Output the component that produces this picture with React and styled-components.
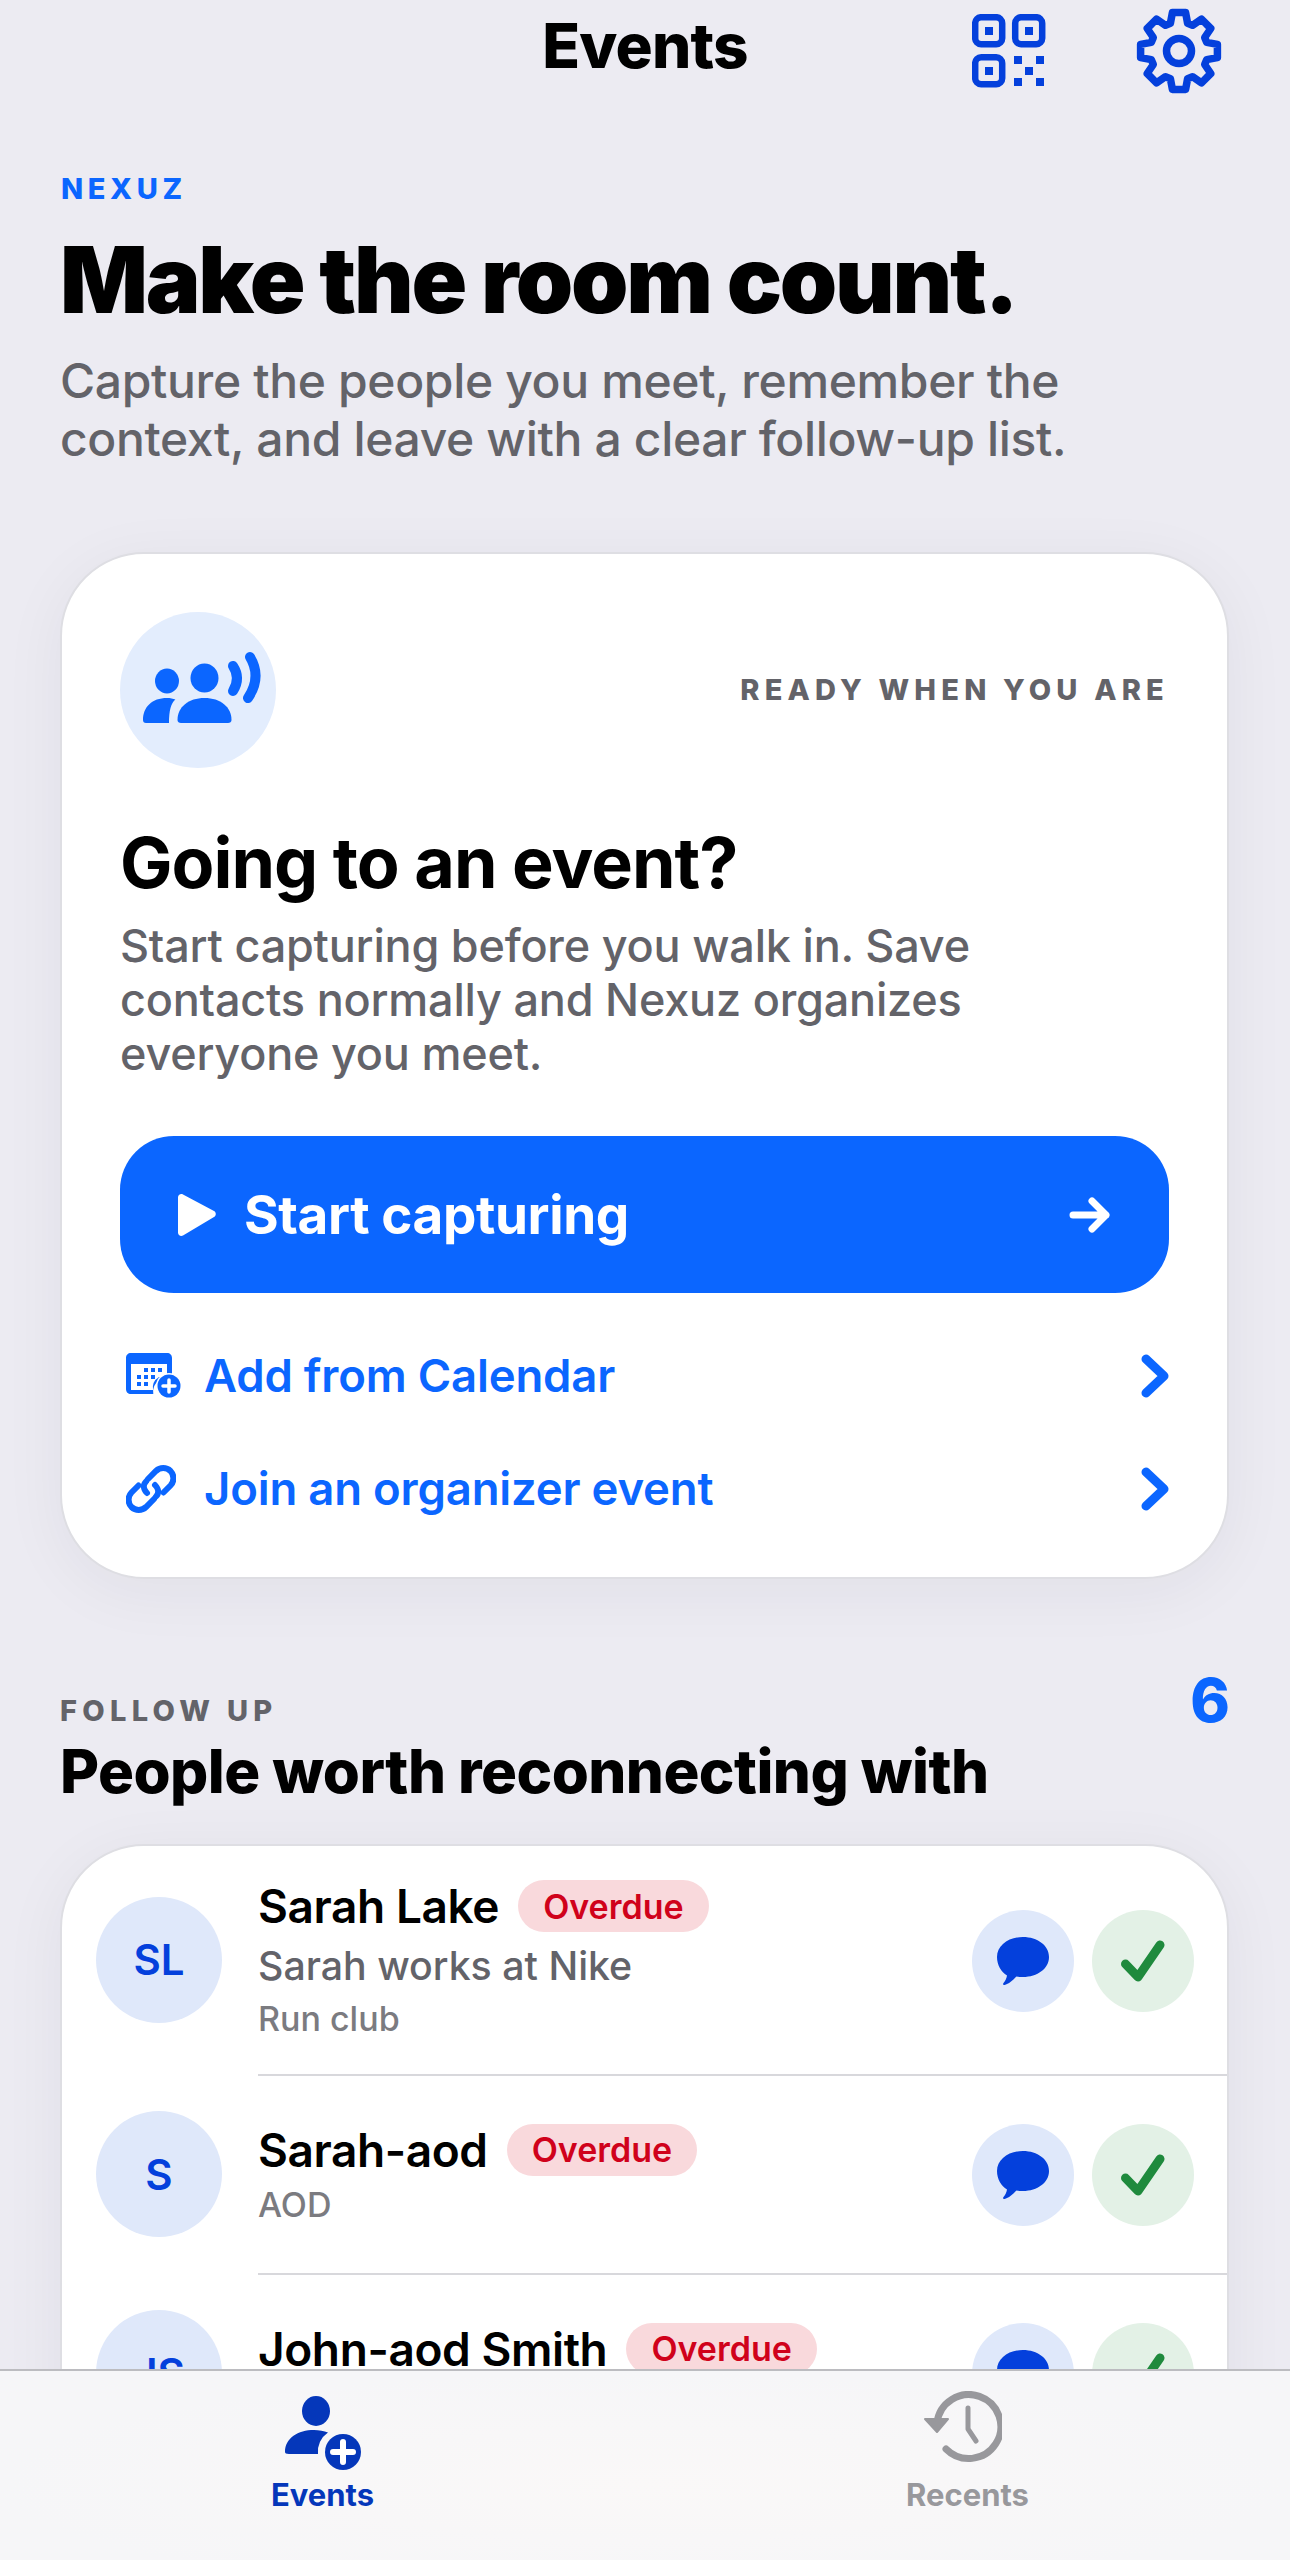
import styled, { createGlobalStyle } from "styled-components";

const blue = "#0b66ff";
const navy = "#0440dc";

const GlobalStyle = createGlobalStyle`
  html, body { margin: 0; padding: 0; background: #ecebf2; }
  * { box-sizing: border-box; }
  body { font-family: Inter, "Noto Sans", sans-serif; -webkit-font-smoothing: antialiased; }
`;

const Screen = styled.div`
  position: relative;
  width: 1290px;
  height: 2560px;
  overflow: hidden;
  background: #ecebf2;
`;

const Nav = styled.header`
  display: grid;
  grid-template-columns: 1fr auto 1fr;
  align-items: center;
  height: 102px;
  padding: 0 68px 6px 68px;
`;

const NavTitle = styled.h1`
  grid-column: 2;
  margin: 0 0 6px;
  font-size: 62px;
  font-weight: 800;
  letter-spacing: -0.8px;
  color: #000;
`;

const NavActions = styled.div`
  grid-column: 3;
  display: flex;
  justify-content: flex-end;
  align-items: center;
  gap: 90px;
  margin-top: 6px;
`;

const Content = styled.main`
  padding: 0 61px 0 60px;
`;

const Hero = styled.section`
  padding-top: 70px;
`;

const Eyebrow = styled.div`
  font-size: 29px;
  line-height: 34px;
  font-weight: 800;
  letter-spacing: 5.3px;
  color: ${(p) => p.$color || "#636369"};
`;

const Brand = styled(Eyebrow)`
  margin-left: 1px;
  letter-spacing: 4.6px;
`;

const Headline = styled.h2`
  margin: 24px 0 0;
  font-size: 92px;
  line-height: 100px;
  font-weight: 900;
  letter-spacing: -2.3px;
  color: #000;
`;

const Lead = styled.p`
  margin: 22px 0 0;
  font-size: 48px;
  line-height: 58px;
  font-weight: 500;
  letter-spacing: -0.35px;
  color: #636369;
`;

const Card = styled.section`
  background: #fff;
  border: 2px solid #dedee3;
  border-radius: 84px;
  box-shadow: 0 12px 64px rgba(30, 30, 60, 0.055);
`;

const CaptureCard = styled(Card)`
  margin-top: 84px;
  height: 1027px;
  padding: 58px;
`;

const CardTop = styled.div`
  display: flex;
  align-items: center;
  justify-content: space-between;
`;

const IconDisc = styled.div`
  display: flex;
  align-items: center;
  justify-content: center;
  width: 156px;
  height: 156px;
  border-radius: 50%;
  background: #e3edfd;
`;

const Ready = styled(Eyebrow)`
  letter-spacing: 5.2px;
`;

const CardTitle = styled.h3`
  margin: 55px 0 0;
  font-size: 70px;
  line-height: 80px;
  font-weight: 700;
  letter-spacing: -1px;
  color: #000;
`;

const CardText = styled.p`
  margin: 16px 0 0;
  font-size: 45px;
  line-height: 54px;
  font-weight: 500;
  letter-spacing: -0.2px;
  color: #636369;
`;

const PrimaryButton = styled.button`
  display: flex;
  align-items: center;
  width: 100%;
  height: 157px;
  margin-top: 55px;
  padding: 0 58px;
  border: 0;
  border-radius: 54px;
  background: ${blue};
  color: #fff;
  font: 700 53px Inter, sans-serif;
  letter-spacing: -0.4px;
`;

const ButtonLabel = styled.span`
  flex: 1;
  margin-left: 28px;
  text-align: left;
`;

const LinkRow = styled.a`
  display: flex;
  align-items: center;
  height: 113px;
  padding-left: 6px;
  color: ${blue};
  font-size: 45.500px;
  font-weight: 600;
  letter-spacing: -0.2px;
`;

const LinkIcon = styled.span`
  display: flex;
  justify-content: flex-start;
  width: 78px;
`;

const LinkLabel = styled.span`
  flex: 1;
`;

const LinkList = styled.div`
  margin-top: 26px;
`;

const SectionHead = styled.div`
  display: flex;
  justify-content: space-between;
  align-items: flex-start;
  margin-top: 115px;
`;

const SectionTitle = styled.h3`
  margin: 8px 0 0;
  font-size: 60px;
  line-height: 70px;
  font-weight: 800;
  letter-spacing: -0.55px;
  color: #000;
`;

const Count = styled.div`
  margin: -27px -1px 0 0;
  font-size: 60px;
  line-height: 66px;
  font-weight: 800;
  color: ${blue};
`;

const ListCard = styled(Card)`
  margin-top: 38px;
`;

const Row = styled.div`
  display: flex;
  align-items: center;
  gap: 36px;
  padding-left: 34px;
`;

const Avatar = styled.div`
  display: flex;
  flex: none;
  align-items: center;
  justify-content: center;
  width: 126px;
  height: 126px;
  margin-bottom: 3px;
  border-radius: 50%;
  background: #dfe8fa;
  color: ${navy};
  font-size: 42px;
  font-weight: 600;
`;

const RowBody = styled.div`
  display: flex;
  flex: 1;
  align-items: center;
  justify-content: space-between;
  min-height: 199px;
  padding: 33px 33px 32px 0;
  border-bottom: 2px solid #d8d8dc;
`;

const NameLine = styled.div`
  display: flex;
  align-items: center;
  gap: 19px;
  height: 54px;
`;

const Name = styled.span`
  font-size: 46px;
  font-weight: 600;
  letter-spacing: -0.4px;
  color: #000;
`;

const Badge = styled.span`
  display: flex;
  align-items: center;
  height: 52px;
  padding: 0 25px;
  border-radius: 26px;
  background: #f9d9dc;
  color: #d0021b;
  font-size: 34px;
  font-weight: 600;
`;

const Subtitle = styled.div`
  margin-top: 8px;
  font-size: 39.300px;
  line-height: 50px;
  font-weight: 500;
  color: #636369;
`;

const Meta = styled.div`
  margin-top: 5px;
  font-size: 34px;
  line-height: 46px;
  font-weight: 500;
  color: #7b7b80;
`;

const Actions = styled.div`
  display: flex;
  gap: 18px;
`;

const RoundButton = styled.button`
  display: flex;
  align-items: center;
  justify-content: center;
  width: 102px;
  height: 102px;
  padding: 0;
  border: 0;
  border-radius: 50%;
  background: ${(p) => p.$tint};
`;

const TabBar = styled.nav`
  position: absolute;
  left: 0;
  right: 0;
  bottom: 0;
  display: grid;
  grid-template-columns: 1fr 1fr;
  height: 191px;
  border-top: 2px solid #bcbcc0;
  background: radial-gradient(ellipse at 50% 60%, #faf8f8 0%, #f6f6f8 70%);
`;

const Tab = styled.div`
  display: flex;
  flex-direction: column;
  align-items: center;
  padding-top: ${(p) => p.$top}px;
  color: ${(p) => p.$color};
  font-size: 31px;
  font-weight: 700;
`;

const TabIcon = styled.div`
  display: flex;
  align-items: flex-start;
  justify-content: center;
  height: ${(p) => p.$height}px;
  margin-left: ${(p) => p.$shift || 0}px;
`;

const TabLabel = styled.span`
  margin-top: 6px;
  line-height: 38px;
`;

const CrowdGlyph = styled.svg`
  margin: 0 0 5px 8px;
`;

// 8 tooth gear outline, tooth pointing straight up
const gearPath = (() => {
  const pts = [];
  for (let i = 0; i < 8; i++) {
    const a = (i * Math.PI) / 4 - Math.PI / 2;
    [[-0.3, 29], [-0.17, 39], [0.17, 39], [0.3, 29]].forEach(([d, r]) => {
      pts.push(`${(43 + r * Math.cos(a + d)).toFixed(1)} ${(43 + r * Math.sin(a + d)).toFixed(1)}`);
    });
  }
  return `M${pts.join("L")}Z`;
})();

const GearIcon = () => (
  <svg width="86" height="86" viewBox="0 0 86 86" fill="none" stroke={navy} strokeWidth="7.500" strokeLinejoin="round">
    <path d={gearPath} />
    <circle cx="43" cy="43" r="12.5" />
  </svg>
);

const QrIcon = () => (
  <svg width="74" height="74" viewBox="0 0 74 74" fill={navy}>
    <g fill="none" stroke={navy} strokeWidth="6.5">
      <rect x="3.2" y="3.2" width="27" height="27" rx="6" />
      <rect x="43.2" y="3.2" width="27" height="27" rx="6" />
      <rect x="3.2" y="43.2" width="27" height="27" rx="6" />
    </g>
    <rect x="13" y="13" width="8" height="8" />
    <rect x="53" y="13" width="8" height="8" />
    <rect x="13" y="53" width="8" height="8" />
    <rect x="42" y="42" width="8" height="8" />
    <rect x="64" y="42" width="8" height="8" />
    <rect x="53" y="53" width="8" height="8" />
    <rect x="42" y="64" width="8" height="8" />
    <rect x="64" y="64" width="8" height="8" />
  </svg>
);

const CrowdIcon = () => (
  <CrowdGlyph width="118" height="73" viewBox="0 0 118 73" fill={blue}>
    <ellipse cx="24" cy="30" rx="12" ry="12.500" />
    <ellipse cx="61.500" cy="27" rx="14" ry="14.500" />
    <path d="M0 69c0-13 9-22 24-22 3.400 0 6 .5 8.400 1.600C28 52 26 60 26 72H3c-2 0-3-1-3-3z" />
    <path d="M34.500 69c0-13 11-22 27-22s27 9 27 22c0 2-1.500 3-3.500 3h-47c-2 0-3.500-1-3.500-3z" />
    <path d="M90 15q8 12 0 25" fill="none" stroke={blue} strokeWidth="10" strokeLinecap="round" />
    <path d="M107 6q12 20 -2 41" fill="none" stroke={blue} strokeWidth="10" strokeLinecap="round" />
  </CrowdGlyph>
);

const PlayIcon = () => (
  <svg width="38" height="42" viewBox="0 0 38 42" fill="#fff">
    <path d="M0 3.500C0 .8 2.800-.8 5 .5l31 16.500c2.400 1.300 2.400 4.700 0 6L5 41.500c-2.200 1.300-5-.3-5-3z" />
  </svg>
);

const ArrowIcon = () => (
  <svg width="42" height="36" viewBox="0 0 42 36" fill="none" stroke="#fff" strokeWidth="7" strokeLinecap="round" strokeLinejoin="round">
    <path d="M4 18h33M23 4l14 14-14 14" />
  </svg>
);

const CalendarIcon = () => (
  <svg width="56" height="46" viewBox="0 0 56 46" fill={blue}>
    <path d="M5 0h36c3 0 5 2 5 5v22H34a14 14 0 0 0-6.700 14H5c-3 0-5-2-5-5V5c0-3 2-5 5-5z" fillRule="evenodd" />
    <path d="M5 11h36v13H33a13 13 0 0 0-6 13H5z" fill="#fff" />
    <g>
      <rect x="18" y="15" width="4" height="4" /><rect x="25" y="15" width="4" height="4" /><rect x="32" y="15" width="4" height="4" />
      <rect x="11" y="22" width="4" height="4" /><rect x="18" y="22" width="4" height="4" /><rect x="25" y="22" width="4" height="4" />
      <rect x="11" y="29" width="4" height="4" /><rect x="18" y="29" width="4" height="4" />
    </g>
    <circle cx="43" cy="33" r="13" fill="#fff" />
    <circle cx="43" cy="33" r="11.500" />
    <path d="M43 27v12M37 33h12" stroke="#fff" strokeWidth="3.500" strokeLinecap="round" />
  </svg>
);

const ChainIcon = () => (
  <svg width="50" height="50" viewBox="0 0 50 50" fill="none" stroke={blue} strokeWidth="6" strokeLinecap="round">
    <path d="M22 15l8-8a10.500 10.500 0 0 1 14.500 0 10.500 10.500 0 0 1 0 14.500l-7 7" />
    <path d="M28 35l-8 8a10.500 10.500 0 0 1-14.500 0 10.500 10.500 0 0 1 0-14.500l7-7" />
    <path d="M21 29c-4-4-4-8.500-1-11.500M29 21c4 4 4 8.500 1 11.500" />
  </svg>
);

const ChevronIcon = () => (
  <svg width="28" height="44" viewBox="0 0 28 44" fill="none" stroke={blue} strokeWidth="9" strokeLinecap="round" strokeLinejoin="round">
    <path d="M5 5l18 17L5 39" />
  </svg>
);

const ChatIcon = () => (
  <svg width="52" height="48" viewBox="0 0 52 48" fill={navy}>
    <path d="M26 0c14.400 0 26 8.400 26 20S40.400 40 26 40c-2.300 0-4.500-.2-6.600-.6-3.200 3.500-7.900 7.700-11.900 8.500-1.300.2-1.800-1-1-2 1.700-2 3-4 3.500-7.400C4.200 35 0 28.200 0 20 0 8.400 11.600 0 26 0z" />
  </svg>
);

const CheckIcon = () => (
  <svg width="44" height="42" viewBox="0 0 44 42" fill="none" stroke="#1f8a3d" strokeWidth="9" strokeLinecap="round" strokeLinejoin="round">
    <path d="M4.500 24L17 37 39 5" />
  </svg>
);

const PersonPlusIcon = () => (
  <svg width="76" height="74" viewBox="0 0 76 74" fill="#0537ba">
    <ellipse cx="31" cy="15" rx="14" ry="15" />
    <path d="M0 56c0-14 13-22 29-22 5 0 10 1 14 2.500A23 23 0 0 0 33 58H4c-3 0-4-1-4-2z" />
    <circle cx="58" cy="56" r="18" />
    <path d="M58 46v20M48 56h20" stroke="#fff" strokeWidth="6" strokeLinecap="round" />
  </svg>
);

const HistoryIcon = () => (
  <svg width="78" height="72" viewBox="0 0 78 72" fill="none" stroke="#98989c" strokeWidth="7" strokeLinecap="round" strokeLinejoin="round">
    <path d="M13 32a32 32 0 1 1 9 26" />
    <path d="M1 28l12 13 11-13z" fill="#98989c" strokeWidth="2" />
    <path d="M44 17v21l8 12" strokeWidth="5" />
  </svg>
);

const people = [
  { initials: "SL", name: "Sarah Lake", subtitle: "Sarah works at Nike", meta: "Run club" },
  { initials: "S", name: "Sarah-aod", meta: "AOD" },
  { initials: "JS", name: "John-aod Smith", meta: "AOD" },
];

export default function App() {
  return (
    <Screen>
      <GlobalStyle />
      <Nav>
        <NavTitle>Events</NavTitle>
        <NavActions>
          <QrIcon />
          <GearIcon />
        </NavActions>
      </Nav>

      <Content>
        <Hero>
          <Brand $color={blue}>NEXUZ</Brand>
          <Headline>Make the room count.</Headline>
          <Lead>
            Capture the people you meet, remember the
            <br />
            context, and leave with a clear follow-up list.
          </Lead>
        </Hero>

        <CaptureCard>
          <CardTop>
            <IconDisc>
              <CrowdIcon />
            </IconDisc>
            <Ready>READY WHEN YOU ARE</Ready>
          </CardTop>
          <CardTitle>Going to an event?</CardTitle>
          <CardText>
            Start capturing before you walk in. Save
            <br />
            contacts normally and Nexuz organizes
            <br />
            everyone you meet.
          </CardText>
          <PrimaryButton>
            <PlayIcon />
            <ButtonLabel>Start capturing</ButtonLabel>
            <ArrowIcon />
          </PrimaryButton>
          <LinkList>
            <LinkRow>
              <LinkIcon><CalendarIcon /></LinkIcon>
              <LinkLabel>Add from Calendar</LinkLabel>
              <ChevronIcon />
            </LinkRow>
            <LinkRow>
              <LinkIcon><ChainIcon /></LinkIcon>
              <LinkLabel>Join an organizer event</LinkLabel>
              <ChevronIcon />
            </LinkRow>
          </LinkList>
        </CaptureCard>

        <SectionHead>
          <div>
            <Eyebrow>FOLLOW UP</Eyebrow>
            <SectionTitle>People worth reconnecting with</SectionTitle>
          </div>
          <Count>6</Count>
        </SectionHead>

        <ListCard>
          {people.map((person) => (
            <Row key={person.name}>
              <Avatar>{person.initials}</Avatar>
              <RowBody>
                <div>
                  <NameLine>
                    <Name>{person.name}</Name>
                    <Badge>Overdue</Badge>
                  </NameLine>
                  {person.subtitle && <Subtitle>{person.subtitle}</Subtitle>}
                  <Meta>{person.meta}</Meta>
                </div>
                <Actions>
                  <RoundButton $tint="#dfe8fa"><ChatIcon /></RoundButton>
                  <RoundButton $tint="#e3f1e6"><CheckIcon /></RoundButton>
                </Actions>
              </RowBody>
            </Row>
          ))}
        </ListCard>
      </Content>

      <TabBar>
        <Tab $color="#0537ba" $top={25}>
          <TabIcon $height={74}><PersonPlusIcon /></TabIcon>
          <TabLabel>Events</TabLabel>
        </Tab>
        <Tab $color="#98989c" $top={20}>
          <TabIcon $height={79} $shift={-10}><HistoryIcon /></TabIcon>
          <TabLabel>Recents</TabLabel>
        </Tab>
      </TabBar>
    </Screen>
  );
}
